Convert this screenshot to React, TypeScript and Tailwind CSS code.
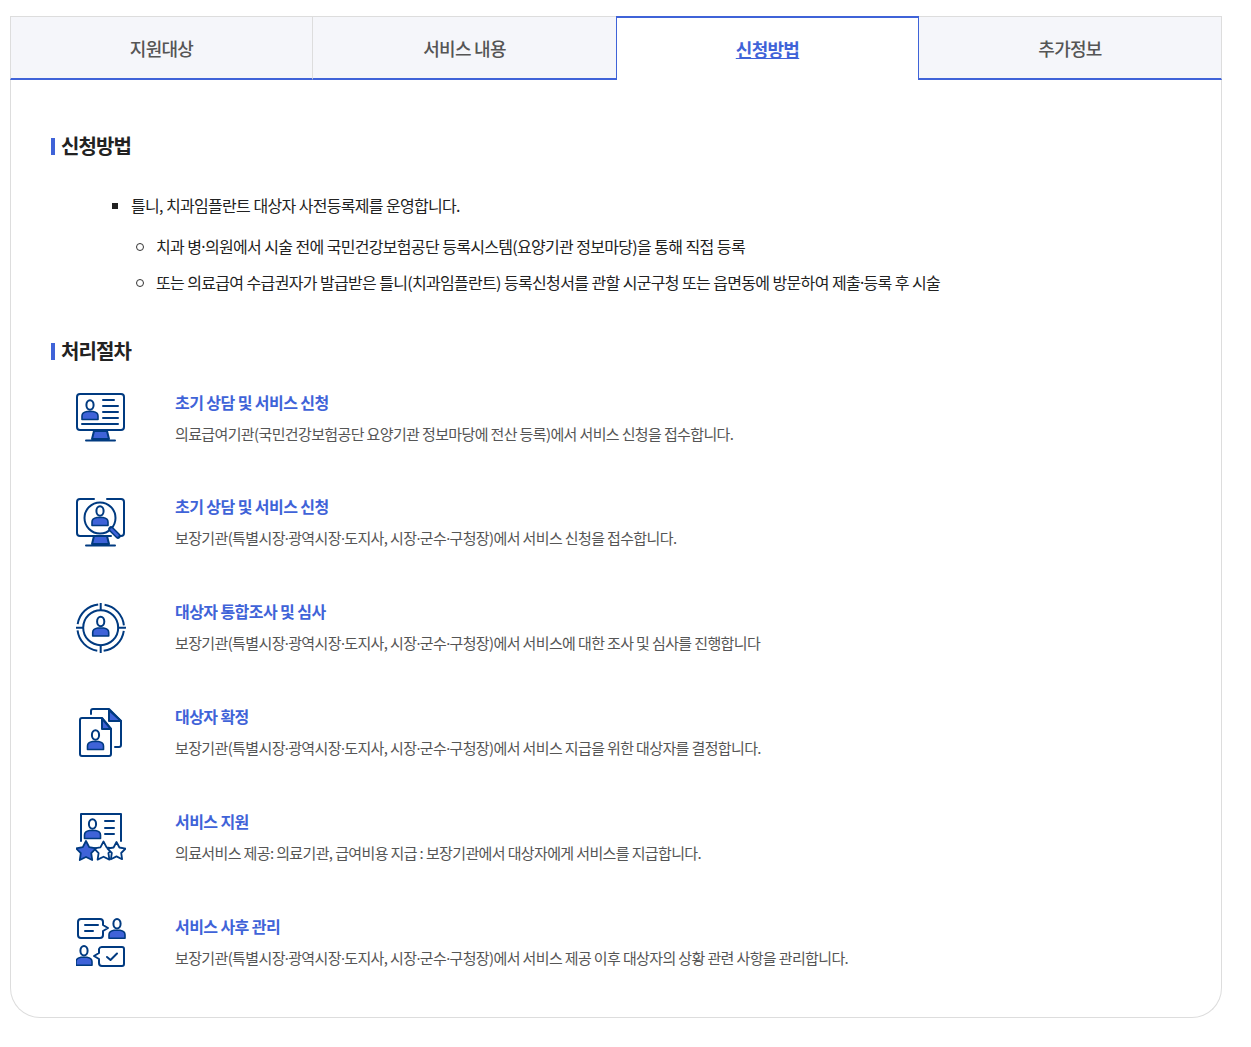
const navy = "#003a80"
const blue = "#3f63d8"

const Person = ({ cx, cy, w = 16 }: { cx: number; cy: number; w?: number }) => (
  <>
    <ellipse cx={cx} cy={cy} rx={3.6} ry={4.8} fill="white" stroke={navy} strokeWidth={2} />
    <path
      d={`M${cx - w / 2} ${cy + 14.5}v-3.5c0-3 3-4.2 5-4.5h${w - 10}c2 .3 5 1.5 5 4.5v3.5z`}
      fill={blue}
      stroke={navy}
      strokeWidth={1.6}
      strokeLinejoin="round"
    />
  </>
)

const Stand = () => (
  <>
    <path d="M18 38h13l2 8H16z" fill={blue} />
    <path d="M10 47.5h29" stroke={navy} strokeWidth={2} />
  </>
)

const Icon = ({ children }: { children: React.ReactNode }) => (
  <svg width="50" height="50" viewBox="0 0 50 50" fill="none" stroke={navy} strokeWidth={2} strokeLinecap="round" strokeLinejoin="round">
    {children}
  </svg>
)

const star = (cx: number, cy: number, r: number) => {
  const pts: string[] = []
  for (let i = 0; i < 10; i++) {
    const rad = i % 2 === 0 ? r : r * 0.52
    const a = (Math.PI / 5) * i - Math.PI / 2
    pts.push(`${(cx + rad * Math.cos(a)).toFixed(1)},${(cy + rad * Math.sin(a)).toFixed(1)}`)
  }
  return pts.join(" ")
}

const icons = [
  <Icon key="a">
    <rect x="1" y="1" width="47" height="36" rx="3" />
    <Person cx={14} cy={12} />
    <path d="M27 7h11M27 13h15M27 19h15M27 25h15M6 31h36" />
    <Stand />
  </Icon>,
  <Icon key="b">
    <path d="M18 1H4a3 3 0 0 0-3 3v31a3 3 0 0 0 3 3h31M31 1h14a3 3 0 0 1 3 3v31a3 3 0 0 1-3 3h-1" />
    <circle cx="24" cy="20" r="15.5" fill="white" />
    <Person cx={24} cy={13} />
    <path d="M35 31l7 7" stroke={navy} strokeWidth={5.5} />
    <path d="M35.500 31.500l6 6" stroke={blue} strokeWidth={2.5} />
    <Stand />
  </Icon>,
  <Icon key="c">
    <circle cx="24.7" cy="24.7" r="23.300" strokeDasharray="30 6.600" strokeDashoffset="-3.300" strokeLinecap="butt" />
    <circle cx="24.7" cy="24.7" r="17.500" />
    <path d="M24.7 0v7M24.7 42.400v7M0 24.7h7M42.400 24.7h7" />
    <Person cx={24.7} cy={18.500} />
  </Icon>,
  <Icon key="d">
    <path d="M15 6V3a2 2 0 0 1 2-2h16l12 12v24a2 2 0 0 1-2 2h-4" />
    <path d="M33 2v11h12z" fill={blue} />
    <path d="M6 10h20l9 11v25a2 2 0 0 1-2 2H6a2 2 0 0 1-2-2V12a2 2 0 0 1 2-2z" fill="white" />
    <path d="M26 10.500v10.500h9z" fill={blue} />
    <Person cx={19.500} cy={27} />
  </Icon>,
  <Icon key="e">
    <path d="M5 28V1h40v27" />
    <Person cx={16.500} cy={11} />
    <path d="M29 8h9M29 15h9M29 21h9" />
    <polygon points={star(27.500, 38.500, 10)} fill="white" strokeWidth={1.8} />
    <polygon points={star(40.500, 38.500, 9.500)} fill="white" strokeWidth={1.8} />
    <polygon points={star(10, 38.500, 10.500)} fill={blue} strokeWidth={1.8} />
  </Icon>,
  <Icon key="f">
    <path d="M5 1h19a3 3 0 0 1 3 3v3l5 3-5 3v4a3 3 0 0 1-3 3H5a3 3 0 0 1-3-3V4a3 3 0 0 1 3-3z" />
    <path d="M9 7h13M9 13h8" />
    <Person cx={41} cy={5.800} />
    <path d="M26 29h20a2 2 0 0 1 2 2v15a2 2 0 0 1-2 2H26a3 3 0 0 1-3-3v-4l-5-3 5-3v-4a3 3 0 0 1 3-2z" />
    <path d="M31 39l3.500 3 6.500-6.500" />
    <Person cx={8} cy={32.800} />
  </Icon>,
]

const steps = [
  ["초기 상담 및 서비스 신청", "의료급여기관(국민건강보험공단 요양기관 정보마당에 전산 등록)에서 서비스 신청을 접수합니다."],
  ["초기 상담 및 서비스 신청", "보장기관(특별시장·광역시장·도지사, 시장·군수·구청장)에서 서비스 신청을 접수합니다."],
  ["대상자 통합조사 및 심사", "보장기관(특별시장·광역시장·도지사, 시장·군수·구청장)에서 서비스에 대한 조사 및 심사를 진행합니다"],
  ["대상자 확정", "보장기관(특별시장·광역시장·도지사, 시장·군수·구청장)에서 서비스 지급을 위한 대상자를 결정합니다."],
  ["서비스 지원", "의료서비스 제공: 의료기관, 급여비용 지급 : 보장기관에서 대상자에게 서비스를 지급합니다."],
  ["서비스 사후 관리", "보장기관(특별시장·광역시장·도지사, 시장·군수·구청장)에서 서비스 제공 이후 대상자의 상황 관련 사항을 관리합니다."],
]

// the CJK font's middle dot is full width, the picture has a narrow one
const Dotted = ({ text }: { text: string }) => (
  <span>
    {text.split("·").map((part, i) => (
      <span key={i}>
        {i > 0 && <span className="font-['Noto_Sans']">·</span>}
        {part}
      </span>
    ))}
  </span>
)

const SectionTitle = ({ children }: { children: React.ReactNode }) => (
  <h3 className="flex items-center gap-[6px] text-[20px] leading-[28px] font-bold tracking-[-0.9px] text-[#222]">
    <span className="w-1 h-[17px] bg-[#3f63d8]" />
    {children}
  </h3>
)

export default function App() {
  return (
    <div className="pl-[10px] pt-4 pb-[29px] w-[1222px] font-['Noto_Sans_CJK_KR','Noto_Sans',sans-serif]">
      <div className="flex h-[64px] text-[18px] tracking-[-0.7px]">
        <div className="w-[302px] pt-[2px] flex items-center justify-center bg-[#f5f6fa] text-[#555] font-medium border-t border-l border-[#ddd] border-b-2 border-b-[#3f63d8]">지원대상</div>
        <div className="w-[304px] pt-[2px] flex items-center justify-center bg-[#f5f6fa] text-[#555] font-medium border-t border-l border-[#ddd] border-b-2 border-b-[#3f63d8]">서비스 내용</div>
        <div className="w-[303px] flex items-center justify-center bg-white text-[#3f63d8] font-bold underline border-t-2 border-x border-[#3f63d8]">신청방법</div>
        <div className="w-[303px] pt-[2px] flex items-center justify-center bg-[#f5f6fa] text-[#555] font-medium border-t border-r border-[#ddd] border-b-2 border-b-[#3f63d8]">추가정보</div>
      </div>
      <div className="border-x border-b border-[#ddd] rounded-b-[30px] pl-10 pt-[52px] pb-[49px]">
        <SectionTitle>신청방법</SectionTitle>
        <div className="pl-[61px] pt-[33px] text-[16px] leading-[24px] tracking-[-0.7px] [word-spacing:0.35px] text-[#222]">
          <div className="flex items-center gap-[13px]">
            <span className="w-[6px] h-[6px] mt-[1px] bg-[#222]" />
            틀니, 치과임플란트 대상자 사전등록제를 운영합니다.
          </div>
          <div className="mt-[17px] ml-[24px] flex items-center gap-[12px]">
            <span className="w-[8px] h-[8px] rounded-full border border-[#333]" />
            <Dotted text="치과 병·의원에서 시술 전에 국민건강보험공단 등록시스템(요양기관 정보마당)을 통해 직접 등록" />
          </div>
          <div className="mt-[11px] ml-[24px] flex items-center gap-[12px]">
            <span className="w-[8px] h-[8px] rounded-full border border-[#333]" />
            <Dotted text="또는 의료급여 수급권자가 발급받은 틀니(치과임플란트) 등록신청서를 관할 시군구청 또는 읍면동에 방문하여 제출·등록 후 시술" />
          </div>
        </div>
        <div className="mt-[42px]">
          <SectionTitle>처리절차</SectionTitle>
        </div>
        <div className="mt-[28px] pl-[25px] flex flex-col gap-[55px]">
          {steps.map(([title, desc], i) => (
            <div key={i} className="flex gap-[49px] h-[50px]">
              <div className="w-[50px] h-[50px] shrink-0">{icons[i]}</div>
              <div className={i === 0 ? "-mt-[3px]" : "-mt-[4px]"}>
                <div className="text-[16px] leading-[24px] font-bold tracking-[-0.58px] text-[#3f63d8]">{title}</div>
                <div className="mt-[8px] text-[15px] leading-[24px] tracking-[-0.63px] text-[#555]">
                  <Dotted text={desc} />
                </div>
              </div>
            </div>
          ))}
        </div>
      </div>
    </div>
  )
}
